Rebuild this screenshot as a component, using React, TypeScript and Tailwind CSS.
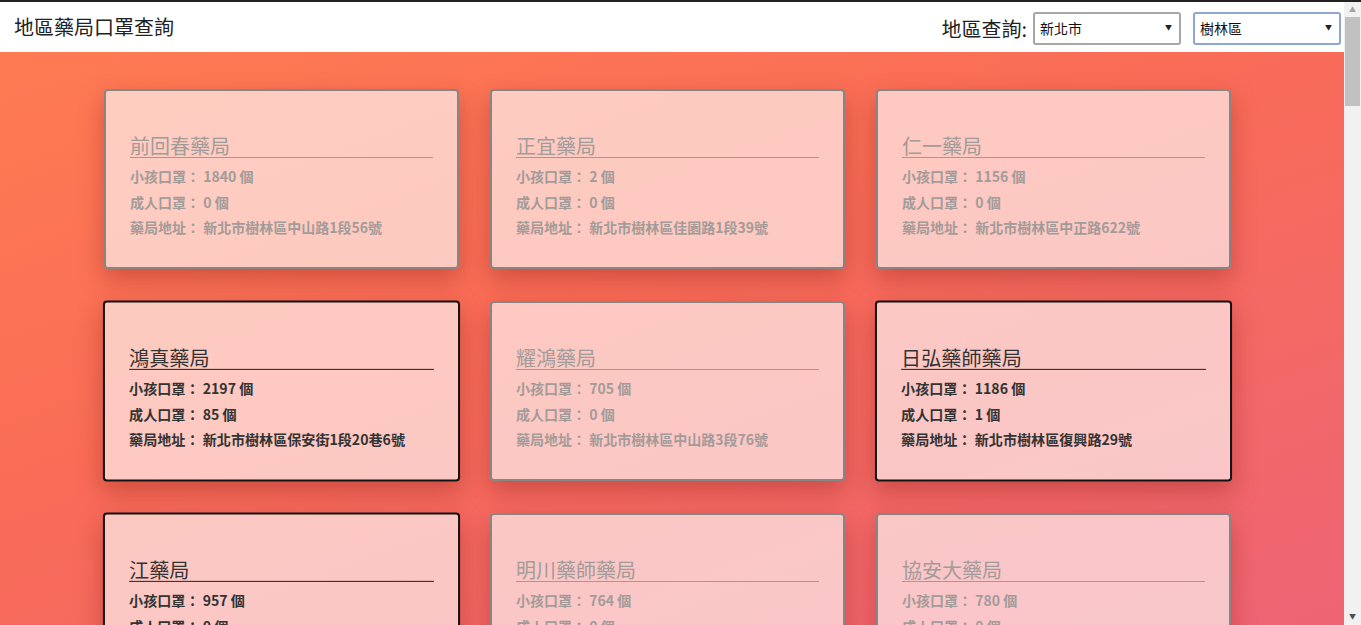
import { useState } from "react"

type Store = {
  name: string
  child: number
  adult: number
  address: string
  active?: boolean
}

const stores: Store[] = [
  { name: "前回春藥局", child: 1840, adult: 0, address: "新北市樹林區中山路1段56號" },
  { name: "正宜藥局", child: 2, adult: 0, address: "新北市樹林區佳園路1段39號" },
  { name: "仁一藥局", child: 1156, adult: 0, address: "新北市樹林區中正路622號" },
  { name: "鴻真藥局", child: 2197, adult: 85, address: "新北市樹林區保安街1段20巷6號", active: true },
  { name: "耀鴻藥局", child: 705, adult: 0, address: "新北市樹林區中山路3段76號" },
  { name: "日弘藥師藥局", child: 1186, adult: 1, address: "新北市樹林區復興路29號", active: true },
  { name: "江藥局", child: 957, adult: 0, address: "新北市樹林區保安街2段112號", active: true },
  { name: "明川藥師藥局", child: 764, adult: 0, address: "新北市樹林區大安路88號" },
  { name: "協安大藥局", child: 780, adult: 0, address: "新北市樹林區三俊街175號" },
]

const font = { fontFamily: '"Noto Sans CJK TC", "Noto Sans", sans-serif' }

function StoreCard({ store }: { store: Store }) {
  const on = store.active
  return (
    <div
      className={
        on
          ? "h-[180px] rounded-[4px] border-2 border-[#111] bg-white/[0.63] px-[24px] pt-[44px] shadow-[0_10px_24px_rgba(140,30,20,0.38)] scale-[1.006]"
          : "h-[180px] rounded-[4px] border-2 border-[#8a8585] bg-white/[0.63] px-[24px] pt-[44px] shadow-[0_10px_24px_rgba(140,30,20,0.38)]"
      }
    >
      <h2
        className={
          on
            ? "border-b border-[#222] text-[20px] leading-[22px] text-[#333]"
            : "border-b border-[#a29a98] text-[20px] leading-[22px] text-[#a39b99]"
        }
      >
        {store.name}
      </h2>
      <div className={on ? "mt-[6px] text-[14px] font-bold text-[#333]" : "mt-[6px] text-[14px] font-bold text-[#a39b99]"}>
        <p className="leading-[25.5px]">小孩口罩： {store.child} 個</p>
        <p className="leading-[25.5px]">成人口罩： {store.adult} 個</p>
        <p className="leading-[25.5px]">藥局地址： {store.address}</p>
      </div>
    </div>
  )
}

function Select({ value, options, onChange, focused }: { value: string; options: string[]; onChange: (v: string) => void; focused?: boolean }) {
  return (
    <div className="relative">
      <select
        value={value}
        onChange={(e) => onChange(e.target.value)}
        className={
          focused
            ? "h-[33px] w-[148px] appearance-none rounded-[3px] border-2 border-[#8ea6d4] bg-white pl-[5px] text-[14px] text-[#111] outline-none"
            : "h-[33px] w-[148px] appearance-none rounded-[3px] border-2 border-[#a6a6a6] bg-white pl-[5px] text-[14px] text-[#111] outline-none"
        }
        style={font}
      >
        {options.map((o) => (
          <option key={o}>{o}</option>
        ))}
      </select>
      <span className="pointer-events-none absolute right-[9px] top-[10px] text-[7px] text-[#222]">▼</span>
    </div>
  )
}

export default function App() {
  const [city, setCity] = useState("新北市")
  const [area, setArea] = useState("樹林區")

  return (
    <div className="flex h-screen overflow-hidden" style={font}>
      <div className="flex-1 overflow-hidden bg-[linear-gradient(160deg,#ff7d52_0%,#f96c57_45%,#ee6474_100%)]">
        {/* Header */}
        <header className="flex h-[52px] items-center justify-between border-t-2 border-[#222] bg-white pl-[14px] pr-[3px]">
          <h1 className="text-[20px] text-[#222]">地區藥局口罩查詢</h1>
          <div className="flex items-center gap-[12px] pt-[3px]">
            <span className="-mr-[6px] mt-[1px] text-[20px] text-[#222]">地區查詢:</span>
            <Select value={city} options={["新北市", "臺北市", "桃園市"]} onChange={setCity} />
            <Select value={area} options={["樹林區", "板橋區", "新莊區"]} onChange={setArea} focused />
          </div>
        </header>

        {/* Cards */}
        <main className="ml-[104px] grid w-[1127px] grid-cols-[355px_355px_355px] gap-x-[31px] gap-y-[32px] pt-[37px]">
          {stores.map((s, i) => (
            <StoreCard key={i} store={s} />
          ))}
        </main>
      </div>

      {/* scrollbar */}
      <div className="flex w-[17px] flex-col border-t-2 border-[#222] bg-[#f1f1f1]">
        <div className="flex h-[15px] items-center justify-center text-[7px] leading-none text-[#a3a3a3]">▲</div>
        <div className="mx-[1px] h-[89px] bg-[#c1c1c1]" />
        <div className="flex-1" />
        <div className="flex h-[17px] items-center justify-center text-[7px] leading-none text-[#505050]">▼</div>
      </div>
    </div>
  )
}
